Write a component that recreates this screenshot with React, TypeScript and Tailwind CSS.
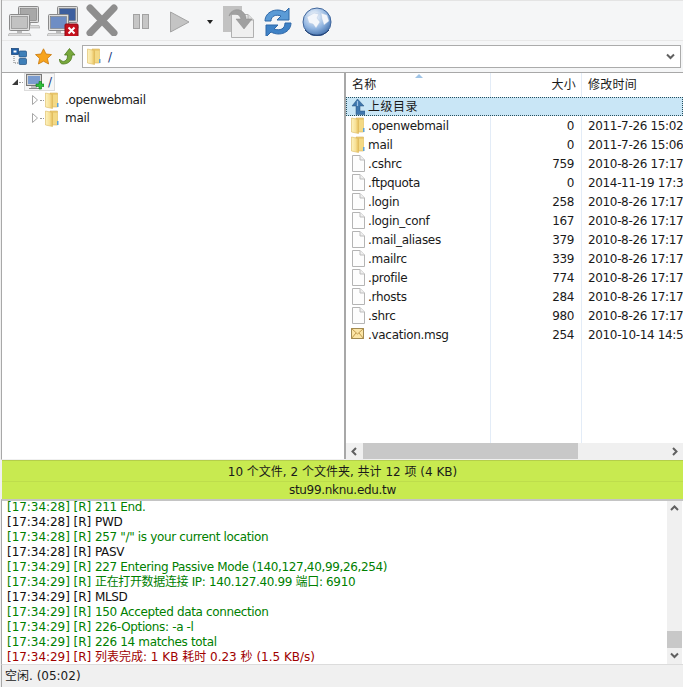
import React from "react";

const F = { fontFamily: '"DejaVu Sans", "Noto Sans CJK SC", sans-serif' };

function Folder({ className = "w-[14px] h-[17px]" }: { className?: string }) {
  return (
    <svg viewBox="0 0 14 17" className={className + " shrink-0"}>
      <defs>
        <linearGradient id="fo" x1="0" y1="0" x2="1" y2="0">
          <stop offset="0" stopColor="#fdf3c0" />
          <stop offset="0.6" stopColor="#f7e096" />
          <stop offset="1" stopColor="#e4bd58" />
        </linearGradient>
      </defs>
      <path d="M5 1 H12.5 V15 H5 Z" fill="#eccb70" stroke="#d8b45c" strokeWidth=".6" />
      <path d="M.5 1 L7.5 2.5 V16.5 L.5 15 Z" fill="url(#fo)" stroke="#dcb95e" strokeWidth=".6" />
      <rect x="8" y="3" width="4.5" height="11.5" fill="#f3d985" />
      <rect x="12" y="11" width="1.5" height="4" fill="#5fa3d8" />
    </svg>
  );
}

function FileIcon() {
  return (
    <svg viewBox="0 0 14 17" className="w-[14px] h-[17px] shrink-0">
      <path d="M1.5 .5 H9 L13.5 5 V16.5 H1.5 Z" fill="#fdfdfd" stroke="#b4b4b4" />
      <path d="M9 .5 V5 H13.5" fill="#efefef" stroke="#bdbdbd" />
    </svg>
  );
}

function MailIcon() {
  return (
    <svg viewBox="0 0 14 17" className="w-[14px] h-[17px] shrink-0">
      <rect x=".5" y="2.5" width="12" height="10" fill="#fbe5a6" stroke="#a08a52" />
      <path d="M.5 2.5 L6.5 8 L12.5 2.5 M.5 12.5 L5 7 M12.5 12.5 L8 7" fill="none" stroke="#c09a4e" />
    </svg>
  );
}

function UpIcon() {
  return (
    <svg viewBox="0 0 14 16" className="w-[14px] h-[16px] shrink-0">
      <path d="M6.5 0 L13 7 H9 V12 H14 V15.5 H5 V7 H1 Z" fill="#3f77ad" stroke="#28527f" strokeWidth=".5" />
      <path d="M6.5 2 V7" stroke="#9fc4e6" strokeWidth="1.2" />
    </svg>
  );
}

function Monitor({ x, y, color, body }: { x: number; y: number; color: string; body: string }) {
  return (
    <g transform={`translate(${x} ${y})`}>
      <rect x=".5" y=".5" width="20" height="16" rx="1" fill={body} stroke="#8a8a8a" />
      <rect x="2.5" y="2.5" width="16" height="12" fill={color} stroke="#6f6f6f" strokeWidth=".5" />
      <path d="M8 17 H13 V19 H8 Z" fill="#bbb" />
      <path d="M0 19.5 H21 L22 22 H-1 Z" fill={body} stroke="#9a9a9a" strokeWidth=".5" />
    </g>
  );
}

function Connect() {
  return (
    <svg viewBox="0 0 32 32" className="w-8 h-8 shrink-0">
      <Monitor x={10} y={2} color="#a8a8a8" body="#d8d8d8" />
      <Monitor x={1} y={10} color="#c2c2c2" body="#dedede" />
    </svg>
  );
}

function Disconnect() {
  return (
    <svg viewBox="0 0 32 32" className="w-8 h-8 shrink-0">
      <Monitor x={10} y={2} color="#3d5f9e" body="#d8d8d8" />
      <Monitor x={1} y={10} color="#6e8dc4" body="#dedede" />
      <rect x="18" y="20" width="13" height="13" rx="1" fill="#c4101c" stroke="#8c0a14" />
      <path d="M21.5 23.5 L27.5 29.5 M27.5 23.5 L21.5 29.5" stroke="#fff" strokeWidth="2" />
    </svg>
  );
}

function Cross() {
  return (
    <svg viewBox="0 0 32 32" className="w-8 h-8 shrink-0">
      <path d="M4 4 L28 29 M28 4 L4 29" stroke="#8e8e8e" strokeWidth="7" strokeLinecap="round" />
    </svg>
  );
}

function Pause() {
  return (
    <svg viewBox="0 0 32 32" className="w-8 h-8 shrink-0">
      <rect x="8.5" y="10.5" width="6" height="14" fill="#c6c6c6" stroke="#a2a2a2" />
      <rect x="17.5" y="10.5" width="6" height="14" fill="#c6c6c6" stroke="#a2a2a2" />
    </svg>
  );
}

function Play() {
  return (
    <svg viewBox="0 0 32 32" className="w-8 h-8 shrink-0">
      <path d="M6.5 8 L25 18 L6.5 28 Z" fill="#c4c4c4" stroke="#a4a4a4" />
    </svg>
  );
}

function Download() {
  return (
    <svg viewBox="0 0 32 34" className="w-8 h-[34px] shrink-0">
      <rect x="0" y="2" width="19" height="26" fill="#c2c2c2" />
      <path d="M8.5 10.5 H25 L30.5 16 V33.5 H8.5 Z" fill="#efefef" stroke="#b0b0b0" />
      <path d="M25 10.5 V16 H30.5" fill="#dcdcdc" stroke="#b0b0b0" />
      <path d="M6 12 C8 4 20 3 23 13 L23 15 H29 L21 25 L13 15 H18 C16 9 10 8 6 12 Z" fill="#a0a0a0" stroke="#8a8a8a" strokeWidth=".5" />
    </svg>
  );
}

function Refresh() {
  return (
    <svg viewBox="0 0 32 32" className="w-8 h-8 shrink-0">
      <path d="M3 17 C3 8 14 3 23 8 L27 4 V16 H15 L19 12 C14 10 9 12 9 17 Z" fill="#5b9bd6" stroke="#2f68a8" strokeWidth="1" />
      <path d="M29 19 C29 28 18 33 9 28 L4 33 V21 H16 L12 25 C18 27 23 25 23 19 Z" fill="#3f82c6" stroke="#2f68a8" strokeWidth="1" />
    </svg>
  );
}

function Globe() {
  return (
    <svg viewBox="0 0 32 32" className="w-8 h-8 shrink-0">
      <defs>
        <radialGradient id="gl" cx="0.4" cy="0.3" r="0.8">
          <stop offset="0" stopColor="#ffffff" />
          <stop offset="0.55" stopColor="#90b4e0" />
          <stop offset="1" stopColor="#2f5f9f" />
        </radialGradient>
      </defs>
      <circle cx="16" cy="18" r="14" fill="url(#gl)" stroke="#40669c" strokeWidth="1" />
      <path d="M6 13 L13 9 L18 10 L16 14 L19 18 L15 24 L12 20 L8 19 Z M20 9 L26 11 L28 17 L23 21 L21 15 Z" fill="#f3f6fb" stroke="#aac0dd" strokeWidth=".4" />
      <path d="M4 26 C10 33 22 33 28 26" fill="none" stroke="#1f3d70" strokeWidth="1" />
    </svg>
  );
}

function SiteIcon() {
  return (
    <svg viewBox="0 0 16 17" className="w-4 h-[17px] shrink-0">
      <rect x=".5" y=".5" width="7" height="6" fill="#1f5fa8" stroke="#123d70" strokeWidth=".7" />
      <rect x="2.5" y="2.5" width="3" height="2" fill="#fff" />
      <rect x="8" y="3" width="7.5" height="6" rx="1" fill="#3e7fb8" stroke="#1f4f80" strokeWidth=".7" />
      <rect x="8" y="10.5" width="7.5" height="6" rx="1" fill="#3e7fb8" stroke="#1f4f80" strokeWidth=".7" />
      <path d="M3 8 V15 H7" stroke="#777" strokeDasharray="1 1" fill="none" />
    </svg>
  );
}

function Star() {
  return (
    <svg viewBox="0 0 17 17" className="w-[17px] h-[17px] shrink-0">
      <path d="M8.5 .8 L11 6 L16.5 6.6 L12.4 10.4 L13.6 16 L8.5 13.2 L3.4 16 L4.6 10.4 L.5 6.6 L6 6 Z" fill="#f7a41d" stroke="#c8780e" strokeWidth=".8" />
    </svg>
  );
}

function GreenUp() {
  return (
    <svg viewBox="0 0 17 17" className="w-[17px] h-[17px] shrink-0">
      <path d="M10.5 .5 L16 7 H13 C13 12 10 16 4 16 C1.5 16 .5 14 .5 11 C2 13 4 14 6 13 C8 12 8.5 10 8.5 7 H5.5 Z" fill="#78a83c" stroke="#4c7a20" strokeWidth=".8" />
    </svg>
  );
}

function Computer() {
  return (
    <svg viewBox="0 0 18 17" className="w-[18px] h-[17px] shrink-0">
      <rect x=".5" y=".5" width="15" height="11" fill="#d5d5d5" stroke="#777" />
      <rect x="2" y="2" width="12" height="8" fill="#7b9ccf" />
      <path d="M5 13 H11 M3 14.5 H13" stroke="#888" />
      <path d="M10 10 H13 V7.5 H15.5 V10 H18 V12.5 H15.5 V15 H13 V12.5 H10 Z" fill="#2fbf3a" stroke="#0c7a18" strokeWidth=".6" />
    </svg>
  );
}

function TreeArrow() {
  return (
    <svg viewBox="0 0 6 10" className="w-[6px] h-[10px] shrink-0">
      <path d="M.5 .5 L5.5 5 L.5 9.5 Z" fill="#fff" stroke="#a6a6a6" />
    </svg>
  );
}

function Chevron({ d, className }: { d: string; className: string }) {
  return (
    <svg viewBox="0 0 9 9" className={className}>
      <path d={d} fill="none" stroke="#606060" strokeWidth="2" />
    </svg>
  );
}

const files: [string, string, string, "folder" | "file" | "mail"][] = [
  [".openwebmail", "0", "2011-7-26 15:02", "folder"],
  ["mail", "0", "2011-7-26 15:06", "folder"],
  [".cshrc", "759", "2010-8-26 17:17", "file"],
  [".ftpquota", "0", "2014-11-19 17:34", "file"],
  [".login", "258", "2010-8-26 17:17", "file"],
  [".login_conf", "167", "2010-8-26 17:17", "file"],
  [".mail_aliases", "379", "2010-8-26 17:17", "file"],
  [".mailrc", "339", "2010-8-26 17:17", "file"],
  [".profile", "774", "2010-8-26 17:17", "file"],
  [".rhosts", "284", "2010-8-26 17:17", "file"],
  [".shrc", "980", "2010-8-26 17:17", "file"],
  [".vacation.msg", "254", "2010-10-14 14:52", "mail"],
];

const logs: [string, string, string][] = [
  ["[17:34:28] [R]", "211 End.", "text-[#008000]"],
  ["[17:34:28] [R]", "PWD", "text-[#101010]"],
  ["[17:34:28] [R]", '257 "/" is your current location', "text-[#008000]"],
  ["[17:34:28] [R]", "PASV", "text-[#101010]"],
  ["[17:34:29] [R]", "227 Entering Passive Mode (140,127,40,99,26,254)", "text-[#008000]"],
  ["[17:34:29] [R]", "正在打开数据连接 IP: 140.127.40.99 端口: 6910", "text-[#008000]"],
  ["[17:34:29] [R]", "MLSD", "text-[#101010]"],
  ["[17:34:29] [R]", "150 Accepted data connection", "text-[#008000]"],
  ["[17:34:29] [R]", "226-Options: -a -l", "text-[#008000]"],
  ["[17:34:29] [R]", "226 14 matches total", "text-[#008000]"],
  ["[17:34:29] [R]", "列表完成: 1 KB 耗时 0.23 秒 (1.5 KB/s)", "text-[#a00000]"],
];

export default function App() {
  return (
    <div style={F} className="w-[683px] h-[687px] overflow-hidden bg-[#f0f0f0] text-[12px] text-[#1a1a1a] flex flex-col border-l border-l-[#f0f0f0]">
      <div className="flex flex-col h-[72px] shrink-0 bg-[#f5f6f7] border-l border-l-[#a8a8a8]">
        <div className="h-[41px] flex items-start pt-[3px] pl-[6px] gap-[7px] border-b border-b-[#e8e8e8] border-t border-t-[#e4e4e4]">
          <Connect />
          <Disconnect />
          <Cross />
          <Pause />
          <Play />
          <div className="w-[14px] flex justify-center pt-[16px]">
            <div className="w-0 h-0 border-x-[3.5px] border-x-transparent border-t-[4px] border-t-[#222]" />
          </div>
          <div className="-ml-[1px]"><Download /></div>
          <Refresh />
          <Globe />
        </div>
        <div className="flex-1 flex items-center pl-[9px] pr-[2px]">
          <SiteIcon />
          <div className="ml-[8px]"><Star /></div>
          <div className="ml-[7px]"><GreenUp /></div>
          <div className="ml-[6px] flex-1 h-[23px] bg-white border border-[#ababab] flex items-center pl-[4px] pr-[2px]">
            <Folder />
            <span className="ml-[7px] text-[#1a3a80]">/</span>
            <Chevron d="M1 2.5 L4.5 6 L8 2.5" className="ml-auto mr-[3px] w-[9px] h-[9px]" />
          </div>
        </div>
      </div>

      <div className="h-[388px] shrink-0 flex bg-white border-t border-t-[#a8a8a8] border-l border-l-[#a8a8a8] border-b border-b-[#f0f0f0]">
        <div className="w-[344px] shrink-0 flex flex-col border-r-2 border-r-[#a8a8a8]">
          <div className="h-[18px] flex items-center pl-[10px]">
            <div className="w-0 h-0 border-l-[6px] border-l-transparent border-b-[6px] border-b-[#3a3a3a]" />
            <div className="w-[4px] ml-[1px] border-t border-dotted border-t-[#999]" />
            <div className="ml-[1px] h-[18px] w-[31px] flex items-center gap-[4px] pl-[1px] bg-[#f6f6f6] border border-[#dcdcdc]">
              <Computer />
              <span className="text-[#1a3a80]">/</span>
            </div>
          </div>
          <div className="h-[18px] flex items-center pl-[30px]">
            <TreeArrow />
            <div className="w-[4px] ml-[2px] border-t border-dotted border-t-[#999]" />
            <div className="ml-[1px]"><Folder /></div>
            <span className="ml-[6px] tracking-[-0.3px]">.openwebmail</span>
          </div>
          <div className="h-[18px] flex items-center pl-[30px]">
            <TreeArrow />
            <div className="w-[4px] ml-[2px] border-t border-dotted border-t-[#999]" />
            <div className="ml-[1px]"><Folder /></div>
            <span className="ml-[6px] tracking-[-0.3px]">mail</span>
          </div>
        </div>

        <div className="flex-1 min-w-0 flex flex-col overflow-hidden">
          <div className="flex-1 min-h-0 flex flex-col">
            <div className="h-[24px] shrink-0 flex items-center whitespace-nowrap">
              <div className="w-[145px] shrink-0 h-full flex items-center pl-[6px] border-r border-r-[#e3ecf7] relative">
                <span className="tracking-[0.25px]">名称</span>
                <div className="absolute left-[69px] top-[1px] w-0 h-0 border-x-[4px] border-x-transparent border-b-[4px] border-b-[#9fc4e6]" />
              </div>
              <div className="w-[91px] shrink-0 h-full flex items-center justify-end pr-[5px] border-r border-r-[#e3ecf7] tracking-[0.25px]">大小</div>
              <div className="pl-[6px] tracking-[0.25px]">修改时间</div>
            </div>
            <div className="h-[19px] shrink-0 flex items-center bg-[#c9e6f6] border border-dotted border-[#26505f] pl-[4px] gap-[3px]">
              <UpIcon />
              <span className="tracking-[0.5px]">上级目录</span>
            </div>
            <div className="flex-1 flex flex-col">
              {files.map(([name, size, date, type]) => (
                <div key={name} className="h-[19px] shrink-0 flex items-center whitespace-nowrap">
                  <div className="w-[145px] shrink-0 h-full flex items-center pl-[5px] gap-[3px] border-r border-r-[#e3ecf7]">
                    {type === "folder" ? <Folder /> : type === "mail" ? <MailIcon /> : <FileIcon />}
                    <span className="tracking-[-0.3px]">{name}</span>
                  </div>
                  <div className="w-[91px] shrink-0 h-full flex items-center justify-end pr-[7px] border-r border-r-[#e3ecf7] tracking-[-0.35px]">{size}</div>
                  <div className="pl-[6px] tracking-[-0.35px]">{date}</div>
                </div>
              ))}
              <div className="flex-1 flex">
                <div className="w-[145px] border-r border-r-[#e3ecf7]" />
                <div className="w-[91px] border-r border-r-[#e3ecf7]" />
              </div>
            </div>
          </div>
          <div className="h-[16px] shrink-0 bg-[#f0f0f0] flex items-center">
            <Chevron d="M6 1 L2.5 4.5 L6 8" className="w-[9px] h-[9px] ml-[4px]" />
            <div className="ml-[4px] w-[215px] h-full bg-[#c8c8c8]" />
            <Chevron d="M3 1 L6.5 4.5 L3 8" className="w-[9px] h-[9px] ml-auto mr-[4px]" />
          </div>
        </div>
      </div>

      <div className="h-[39px] shrink-0 bg-[#c8ea50] flex flex-col items-center text-[#1a1a1a] ml-[1px] border-t border-t-[#b4cf4a]">
        <div className="h-[21px] pt-[2px] w-full flex items-center justify-center border-b border-b-[#bedd4c]">10 个文件, 2 个文件夹, 共计 12 项 (4 KB)</div>
        <div className="h-[16px] flex items-center tracking-[-0.3px]">stu99.nknu.edu.tw</div>
      </div>

      <div className="h-[166px] shrink-0 flex bg-white border-t-2 border-t-[#c4c4c4] border-l border-l-[#a8a8a8] border-b border-b-[#dcdcdc]">
        <div className="flex-1 min-w-0 overflow-hidden pl-[5px] whitespace-nowrap -mt-[1px] tracking-[-0.35px]">
          {logs.map(([p, t, c], i) => (
            <div key={i} className={"h-[15px] leading-[15px] flex " + c}>
              <span className="w-[88px] shrink-0 tracking-[-0.05px]">{p}</span>
              <span className={i === 10 ? "tracking-[0px]" : ""}>{t}</span>
            </div>
          ))}
        </div>
        <div className="w-[15px] shrink-0 mr-[1px] bg-[#f0f0f0] flex flex-col">
          <Chevron d="M1 6 L4.5 2.5 L8 6" className="w-[9px] h-[9px] mx-auto mt-[3px]" />
          <div className="mt-[118px] h-[17px] bg-[#c8c8c8]" />
          <Chevron d="M1 2.5 L4.5 6 L8 2.5" className="w-[9px] h-[9px] mx-auto mt-[3px]" />
        </div>
      </div>

      <div className="flex-1 flex items-center pl-[3px] bg-[#f0f0f0] border-l border-l-[#a8a8a8]">空闲. (05:02)</div>
    </div>
  );
}
